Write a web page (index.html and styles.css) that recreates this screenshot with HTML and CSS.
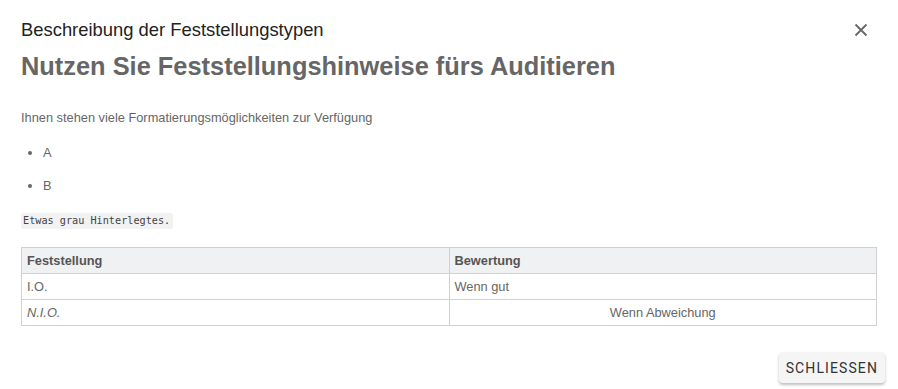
FILE: index.html
```html
<html lang="de">
  <head>
    <meta charset="UTF-8" />
    <meta name="viewport" content="width=device-width, initial-scale=1.0" />
    <title>Feststellungstypen</title>
    <link rel="stylesheet" href="styles.css">
  </head>
  <body>
    <section class="dialog">
      <header class="dialog-header">
        <h2 class="dialog-title">Beschreibung der Feststellungstypen</h2>
        <button class="close-button" aria-label="Schließen">
          <svg width="14" height="14" viewBox="0 0 14 14" fill="none" stroke="currentColor" stroke-width="1.8">
            <path d="M1.5 1.5L12.5 12.5M12.5 1.5L1.5 12.5" />
          </svg>
        </button>
      </header>

      <div class="dialog-content">
        <h1 class="hint-title">Nutzen Sie Feststellungshinweise fürs Auditieren</h1>
        <p class="hint-text">Ihnen stehen viele Formatierungsmöglichkeiten zur Verfügung</p>
        <ul class="hint-list">
          <li>A</li>
          <li>B</li>
        </ul>
        <code class="hint-code">Etwas grau Hinterlegtes.</code>

        <table class="hint-table">
          <thead>
            <tr>
              <th>Feststellung</th>
              <th>Bewertung</th>
            </tr>
          </thead>
          <tbody>
            <tr>
              <td>I.O.</td>
              <td>Wenn gut</td>
            </tr>
            <tr>
              <td><em>N.I.O.</em></td>
              <td class="center">Wenn Abweichung</td>
            </tr>
          </tbody>
        </table>
      </div>

      <footer class="dialog-actions">
        <button class="action-button">Schliessen</button>
      </footer>
    </section>
  </body>
</html>
```

FILE: styles.css
```css
*,
*::before,
*::after {
  box-sizing: border-box;
}
body {
  margin: 0;
  background-color: #fff;
  font-family: "Liberation Sans", Arial, sans-serif;
  color: #666;
}
button {
  cursor: pointer;
  border: 0;
  background: transparent;
}
.dialog {
  padding-inline: 21px;
  height: 389px;
  display: flex;
  flex-direction: column;
}
.dialog-header {
  display: flex;
  justify-content: space-between;
  align-items: center;
  padding-top: 18px;

  & .close-button {
    color: #666;
    padding: 0;
    width: 14px;
    height: 14px;
    margin-right: 9px;
    display: flex;
  }
}
.dialog-title {
  margin: 0;
  font-size: 18.4px;
  line-height: 24px;
  font-weight: normal;
  color: #222;
}
.dialog-content {
  display: flex;
  flex-direction: column;
  align-items: flex-start;
}
.hint-title {
  margin: 8px 0 0;
  font-size: 25.4px;
  line-height: 32px;
  color: #666;
}
.hint-text {
  margin: 27px 0 0;
  font-size: 12.8px;
  line-height: 18px;
}
.hint-list {
  margin: 17px 0 0;
  padding-left: 22px;
  font-size: 12.8px;
  line-height: 18px;

  & li + li {
    margin-top: 15px;
  }
}
.hint-code {
  margin-top: 18px;
  padding: 0 3px 0 2px;
  font-family: "DejaVu Sans Mono", monospace;
  font-size: 10.2px;
  line-height: 16px;
  color: #444;
  background-color: #f2f2f2;
  border-radius: 2px;
}
.hint-table {
  margin-top: 18px;
  width: 100%;
  border-collapse: collapse;
  table-layout: fixed;
  font-size: 12.8px;

  & th,
  & td {
    border: 1px solid #d0d0d0;
    padding: 0 5px;
    height: 26px;
    text-align: left;
    color: #666;
  }
  & th {
    background-color: #f0f1f3;
    color: #555;
  }
  & .center {
    text-align: center;
  }
}
.dialog-actions {
  display: flex;
  justify-content: flex-end;
  margin-top: auto;
  padding-bottom: 6px;
  margin-right: -8px;
}
.action-button {
  font-family: Roboto, sans-serif;
  font-size: 14px;
  letter-spacing: 1.1px;
  text-transform: uppercase;
  color: #333;
  background-color: #f5f5f5;
  height: 31px;
  padding: 0 7px;
  border-radius: 4px;
  box-shadow: 0 2px 3px rgba(0, 0, 0, 0.25);
}
```
